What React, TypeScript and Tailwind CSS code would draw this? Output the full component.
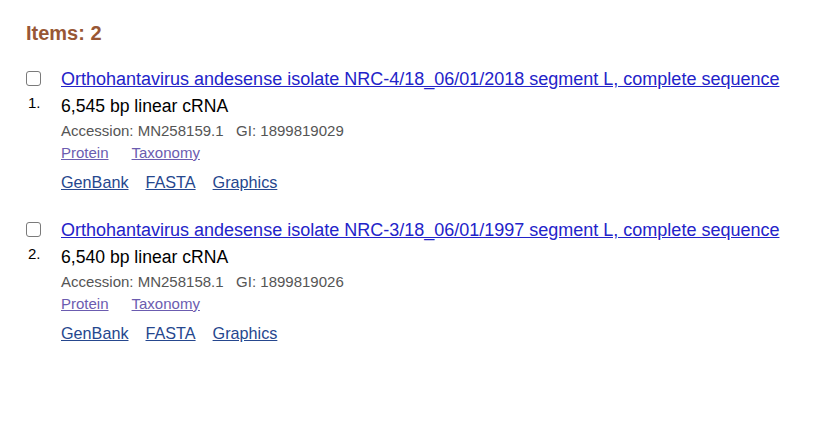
const items = [
  {
    n: 1,
    title: "Orthohantavirus andesense isolate NRC-4/18_06/01/2018 segment L, complete sequence",
    desc: "6,545 bp linear cRNA",
    accession: "MN258159.1",
    gi: "1899819029",
  },
  {
    n: 2,
    title: "Orthohantavirus andesense isolate NRC-3/18_06/01/1997 segment L, complete sequence",
    desc: "6,540 bp linear cRNA",
    accession: "MN258158.1",
    gi: "1899819026",
  },
];

function ResultItem({ n, title, desc, accession, gi }: (typeof items)[number]) {
  return (
    <div className="flex mb-[27px]">
      {/* checkbox + number */}
      <div className="w-[35px] shrink-0 flex flex-col items-start pt-[3px]">
        <input
          type="checkbox"
          className="appearance-none w-[15px] h-[15px] m-0 border-[1.5px] border-[#7a7a7a] rounded-[3px] bg-white"
        />
        <span className="mt-[9px] ml-[2px] text-[15px] leading-[16px] text-black">{n}.</span>
      </div>

      <div className="flex flex-col">
        <a href="#" className="text-[18px] leading-[22px] text-[#2323c9] underline">
          {title}
        </a>
        <div className="text-[17.6px] leading-[24px] mt-[4px] text-black">{desc}</div>
        <div className="text-[15px] leading-[20px] mt-[3px] text-[#555]">
          Accession: {accession}&nbsp;&nbsp;&nbsp;GI: {gi}
        </div>
        <div className="flex gap-[23px] mt-[2px] text-[15px] leading-[20px] text-[#6b5cb0]">
          <a href="#" className="underline">Protein</a>
          <a href="#" className="underline">Taxonomy</a>
        </div>
        <div className="flex gap-[17px] mt-[9px] text-[16.2px] leading-[20px] text-[#26478e]">
          <a href="#" className="underline">GenBank</a>
          <a href="#" className="underline">FASTA</a>
          <a href="#" className="underline">Graphics</a>
        </div>
      </div>
    </div>
  );
}

export default function App() {
  return (
    <div className="w-[813px] h-[438px] bg-white pl-[26px] pt-[21px] font-['Liberation_Sans',Arial,sans-serif]">
      <h3 className="text-[20px] leading-[24px] font-bold text-[#985735] mb-[23px]">Items: 2</h3>
      {items.map((it) => (
        <ResultItem key={it.n} {...it} />
      ))}
    </div>
  );
}
